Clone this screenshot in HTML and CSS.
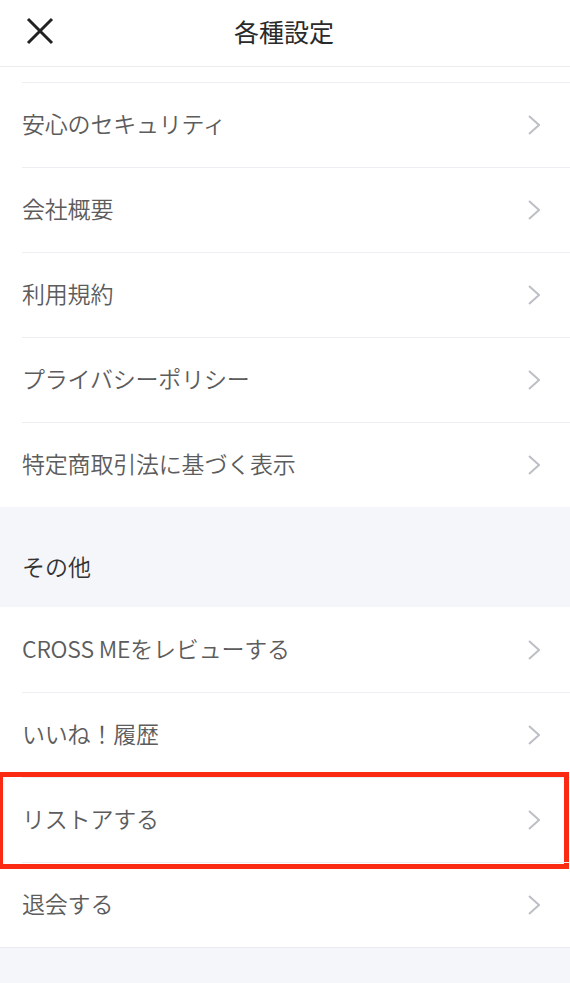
FILE: index.html
```html
<!DOCTYPE html>
<html lang="ja">
<head>
<meta charset="utf-8">
<title>各種設定</title>
<link rel="stylesheet" href="styles.css">
</head>
<body>
<div class="screen">
  <header class="header">
    <button class="close" aria-label="閉じる">
      <svg width="28" height="28" viewBox="0 0 28 28"><path d="M2 2 L26 26 M26 2 L2 26" stroke="#222" stroke-width="3" fill="none" stroke-linecap="butt"/></svg>
    </button>
    <h1 class="title">各種設定</h1>
  </header>

  <div class="list first">
    <div class="row"><span class="label">安心のセキュリティ</span><svg class="chev" width="12" height="20" viewBox="0 0 12 20"><polyline points="1,1 11,10 1,19" fill="none" stroke="#bcc0c5" stroke-width="2"/></svg></div>
    <div class="row"><span class="label">会社概要</span><svg class="chev" width="12" height="20" viewBox="0 0 12 20"><polyline points="1,1 11,10 1,19" fill="none" stroke="#bcc0c5" stroke-width="2"/></svg></div>
    <div class="row"><span class="label">利用規約</span><svg class="chev" width="12" height="20" viewBox="0 0 12 20"><polyline points="1,1 11,10 1,19" fill="none" stroke="#bcc0c5" stroke-width="2"/></svg></div>
    <div class="row"><span class="label">プライバシーポリシー</span><svg class="chev" width="12" height="20" viewBox="0 0 12 20"><polyline points="1,1 11,10 1,19" fill="none" stroke="#bcc0c5" stroke-width="2"/></svg></div>
    <div class="row"><span class="label">特定商取引法に基づく表示</span><svg class="chev" width="12" height="20" viewBox="0 0 12 20"><polyline points="1,1 11,10 1,19" fill="none" stroke="#bcc0c5" stroke-width="2"/></svg></div>
  </div>

  <div class="section-head">その他</div>

  <div class="list second">
    <div class="row"><span class="label">CROSS MEをレビューする</span><svg class="chev" width="12" height="20" viewBox="0 0 12 20"><polyline points="1,1 11,10 1,19" fill="none" stroke="#bcc0c5" stroke-width="2"/></svg></div>
    <div class="row"><span class="label">いいね！履歴</span><svg class="chev" width="12" height="20" viewBox="0 0 12 20"><polyline points="1,1 11,10 1,19" fill="none" stroke="#bcc0c5" stroke-width="2"/></svg></div>
    <div class="row highlighted"><span class="label">リストアする</span><svg class="chev" width="12" height="20" viewBox="0 0 12 20"><polyline points="1,1 11,10 1,19" fill="none" stroke="#bcc0c5" stroke-width="2"/></svg><div class="mark"></div></div>
    <div class="row"><span class="label">退会する</span><svg class="chev" width="12" height="20" viewBox="0 0 12 20"><polyline points="1,1 11,10 1,19" fill="none" stroke="#bcc0c5" stroke-width="2"/></svg></div>
  </div>
  <div class="footer-space"></div>
</div>
</body>
</html>
```

FILE: styles.css
```css
* { box-sizing: border-box; }
html, body {
  margin: 0;
  padding: 0;
  background: #f5f6f9;
}
body {
  font-family: "Noto Sans CJK JP", "Noto Sans", sans-serif;
  width: 570px;
  height: 983px;
  overflow: hidden;
}
.screen {
  display: flex;
  flex-direction: column;
  height: 983px;
}
.header {
  height: 67px;
  flex: none;
  background: #fff;
  border-bottom: 1px solid #ececec;
  display: flex;
  align-items: center;
  justify-content: center;
  position: relative;
}
.close {
  position: absolute;
  left: 26px;
  top: 17px;
  width: 28px;
  height: 28px;
  padding: 0;
  margin: 0;
  border: 0;
  background: none;
  display: block;
}
.close svg { display: block; }
.title {
  margin: 0;
  font-size: 25px;
  font-weight: 400;
  color: #2a2a2a;
  line-height: 1;
  padding-bottom: 4px;
  padding-right: 2px;
}
.list {
  background: #fff;
  flex: none;
}
.list.first {
  padding-top: 15px;
}
.row {
  margin-left: 22px;
  height: 85px;
  border-top: 1px solid #eceef1;
  display: flex;
  align-items: center;
  justify-content: space-between;
  padding-right: 30px;
  position: relative;
}
.list.second .row:first-child {
  border-top: 0;
}
.label {
  font-size: 23px;
  font-weight: 350;
  color: #5c5c5c;
  line-height: 1;
  letter-spacing: -0.2px;
  padding-bottom: 3px;
}
.chev {
  display: block;
  flex: none;
}
.section-head {
  height: 100px;
  flex: none;
  display: flex;
  align-items: flex-end;
  padding: 0 0 28px 22px;
  font-size: 23px;
  font-weight: 350;
  line-height: 26px;
  color: #333;
}
.list.second {
  border-bottom: 1px solid #e8eaee;
}
.mark {
  position: absolute;
  left: -24px;
  right: 1px;
  top: -6px;
  height: 97px;
  border: 5px solid #fb2a12;
  pointer-events: none;
}
.footer-space {
  flex: 1;
  background: #f5f6f9;
}
```
